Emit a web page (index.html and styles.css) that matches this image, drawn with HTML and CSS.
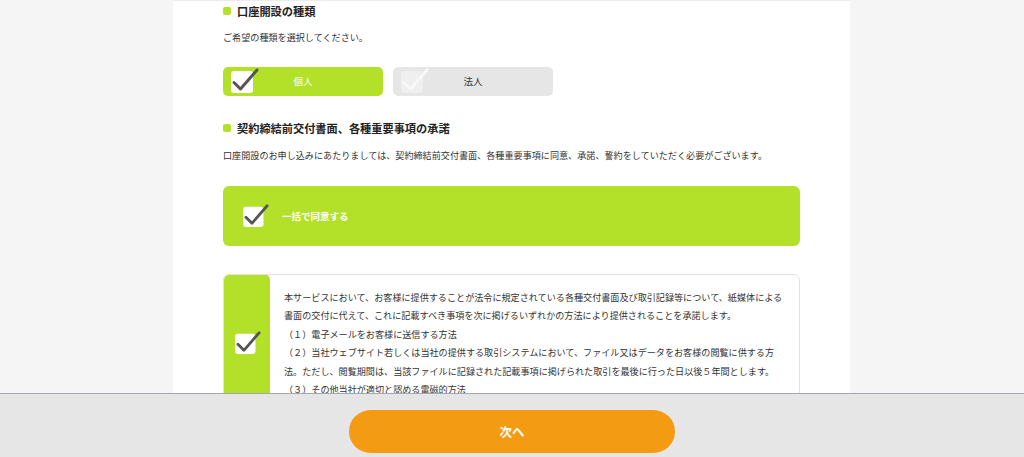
FILE: index.html
```html
<!DOCTYPE html>
<html lang="ja">
<head>
<meta charset="utf-8">
<title>口座開設</title>
<link rel="stylesheet" href="styles.css">
</head>
<body>
<div class="page">
  <main class="main">
    <div class="panel">
      <h2 class="sec-title sec-title-first"><span class="dot"></span>口座開設の種類</h2>
      <p class="lead">ご希望の種類を選択してください。</p>
      <div class="choices">
        <div class="choice choice-on">
          <svg class="chk" viewBox="0 0 30 26" width="30" height="26"><rect x="0" y="4" width="22" height="22" rx="3" fill="#fff"/><path d="M3 15.5 L9.5 22 L26 3" fill="none" stroke="#555" stroke-width="3" stroke-linecap="round" stroke-linejoin="round"/></svg>
          <span class="choice-label">個人</span>
        </div>
        <div class="choice choice-off">
          <svg class="chk" viewBox="0 0 30 26" width="30" height="26"><rect x="0" y="4" width="22" height="22" rx="3" fill="#efefef"/><path d="M3 15.5 L9.5 22 L26 3" fill="none" stroke="#f8f8f8" stroke-width="3" stroke-linecap="round" stroke-linejoin="round"/></svg>
          <span class="choice-label">法人</span>
        </div>
      </div>

      <h2 class="sec-title sec-title-second"><span class="dot"></span>契約締結前交付書面、各種重要事項の承諾</h2>
      <p class="lead lead-2">口座開設のお申し込みにあたりましては、契約締結前交付書面、各種重要事項に同意、承諾、誓約をしていただく必要がございます。</p>

      <div class="agree-all">
        <svg class="chk" viewBox="0 0 30 26" width="28" height="24"><rect x="0" y="4" width="22" height="22" rx="3" fill="#fff"/><path d="M3 15.5 L9.5 22 L26 3" fill="none" stroke="#555" stroke-width="3" stroke-linecap="round" stroke-linejoin="round"/></svg>
        <span class="agree-label">一括で同意する</span>
      </div>

      <div class="card">
        <div class="card-side">
          <svg class="chk" viewBox="0 0 30 26" width="28" height="24"><rect x="0" y="4" width="22" height="22" rx="3" fill="#fff"/><path d="M3 15.5 L9.5 22 L26 3" fill="none" stroke="#555" stroke-width="3" stroke-linecap="round" stroke-linejoin="round"/></svg>
        </div>
        <div class="card-body">
          <p>本サービスにおいて、お客様に提供することが法令に規定されている各種交付書面及び取引記録等について、紙媒体による書面の交付に代えて、これに記載すべき事項を次に掲げるいずれかの方法により提供されることを承諾します。</p>
          <p>（１）電子メールをお客様に送信する方法</p>
          <p>（２）当社ウェブサイト若しくは当社の提供する取引システムにおいて、ファイル又はデータをお客様の閲覧に供する方法。ただし、閲覧期間は、当該ファイルに記録された記載事項に掲げられた取引を最後に行った日以後５年間とします。</p>
          <p>（３）その他当社が適切と認める電磁的方法</p>
        </div>
      </div>
    </div>
  </main>
  <footer class="footer">
    <button class="next" type="button">次へ</button>
  </footer>
</div>
</body>
</html>
```

FILE: styles.css
```css
* { box-sizing: border-box; }
html, body { margin: 0; padding: 0; }
body {
  font-family: "Noto Sans CJK JP", "Noto Sans", sans-serif;
  color: #333;
  background: #f5f5f5;
}
.page {
  height: 100vh;
  display: flex;
  flex-direction: column;
}
.main {
  flex: 1;
  overflow: hidden;
  background: #f5f5f5;
}
.panel {
  width: 677px;
  margin-left: 173px;
  min-height: 100%;
  background: #fff;
  border-top: 1px solid #ececec;
  padding: 2px 50px 0 50px;
}
.sec-title {
  display: flex;
  align-items: center;
  gap: 6px;
  margin: 0;
  font-size: 11.2px;
  line-height: 16px;
  font-weight: 700;
  color: #222;
}
.dot {
  width: 8px;
  height: 8px;
  border-radius: 2px;
  background: #b3e129;
  flex: none;
}
.lead {
  margin: 10px 0 0 0;
  font-size: 9.1px;
  line-height: 16px;
  color: #333;
}
.choices {
  display: flex;
  gap: 10px;
  margin-top: 22px;
}
.choice {
  position: relative;
  width: 160px;
  height: 29px;
  border-radius: 5px;
  display: flex;
  align-items: center;
  justify-content: center;
}
.choice-on { background: #b3e129; color: #fff; }
.choice-off { background: #e6e6e6; color: #333; }
.choice .chk {
  position: absolute;
  left: 8px;
  top: 0px;
}
.choice-label {
  font-size: 9.5px;
  line-height: 1;
}
.sec-title-second { margin-top: 24px; }
.lead-2 { margin-top: 11px; }
.agree-all {
  margin-top: 23px;
  height: 60px;
  border-radius: 6px;
  background: #b3e129;
  display: flex;
  align-items: center;
  gap: 11px;
  padding-left: 20px;
}
.agree-all .chk { margin-top: -3px; }
.agree-label {
  color: #fff;
  font-size: 9.5px;
  font-weight: 700;
}
.card {
  margin-top: 28px;
  display: flex;
  border: 1px solid #e2e2e2;
  border-radius: 6px;
  overflow: hidden;
}
.card-side {
  width: 47px;
  flex: none;
  background: #b3e129;
  border-radius: 6px 6px 0 0;
  display: flex;
  align-items: center;
  justify-content: center;
  margin: -1px 0 0 -1px;
}
.card-side .chk { margin-left: 4px; margin-top: -4px; }
.card-body {
  padding: 13px 14px 16px 14px;
  font-size: 9.1px;
  line-height: 18.4px;
  color: #333;
}
.card-body p { margin: 0; }
.footer {
  height: 64px;
  flex: none;
  background: #e6e6e6;
  border-top: 1px solid #a3a7b3;
  display: flex;
  justify-content: center;
  align-items: flex-start;
  padding-top: 16px;
}
.next {
  width: 326px;
  height: 43px;
  margin-left: 0;
  border: none;
  border-radius: 22px;
  background: #f39c13;
  color: #fff;
  font-family: "Noto Sans CJK JP", "Noto Sans", sans-serif;
  font-size: 12.5px;
  font-weight: 700;
}
```
